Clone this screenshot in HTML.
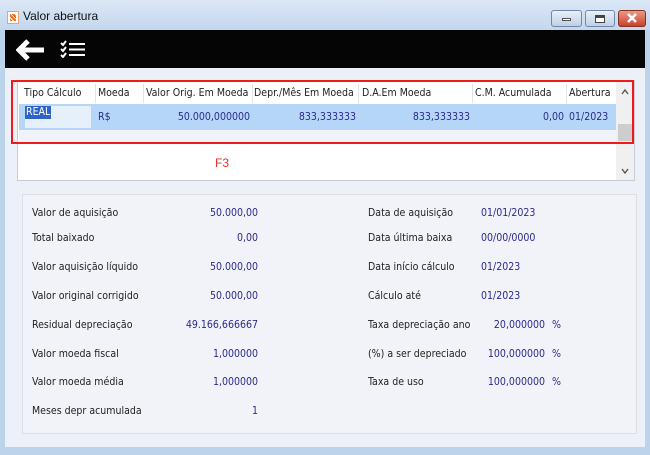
<!DOCTYPE html>
<html><head><meta charset="utf-8"><style>
*{margin:0;padding:0;box-sizing:border-box}
body{width:650px;height:455px;overflow:hidden;background:#bcd3ec;font-family:"DejaVu Sans Condensed","Liberation Sans",sans-serif;font-size:10.5px;color:#222;position:relative}
.abs{position:absolute}
.title{left:0;top:0;width:650px;height:30px;background:linear-gradient(#dbe7f5,#c4d7ee)}
.btn{top:10px;height:17px;border:1px solid #6f87a8;border-radius:3px;background:linear-gradient(#e8f0fa,#bfd0e6)}
.client{left:5px;top:30px;width:640px;height:417px;background:#eef0f7}
.tb{left:5px;top:30px;width:640px;height:38px;background:#050505}
.grid{left:17px;top:80px;width:618px;height:101px;background:#fff;border:1px solid #c9ccd4}
.hd{top:84px;height:19px;line-height:19px;color:#222;white-space:nowrap}
.sep{top:84px;width:1px;height:19px;background:#e2e4ea}
.v{color:#2b2a8c}
.panel{left:22px;top:194px;width:615px;height:240px;background:#f2f3f9;border:1px solid #dcdee6}
.l,.r,.rl,.rv{position:absolute;white-space:nowrap}
.r{text-align:right;width:120px;left:138px;color:#2b2a8c}
.rv{left:481px;color:#2b2a8c}
</style></head><body>
<div class="abs title"></div>
<div class="abs" style="left:7px;top:11px;width:12px;height:13px;background:#fff;border:1px solid #e9a46b"><div style="margin:2px;width:6px;height:7px;background:repeating-linear-gradient(45deg,#ef6c1f 0 2px,#fff 2px 3px)"></div></div>
<div class="abs" style="left:23px;top:9px;font-size:12px;font-family:'Liberation Sans',sans-serif;color:#111">Valor abertura</div>
<div class="abs btn" style="left:551px;width:31px"><div style="margin:7px auto 0;width:9px;height:3px;background:#fff;border:1px solid #555"></div></div>
<div class="abs btn" style="left:585px;width:30px"><div style="margin:4px auto 0;width:10px;height:8px;border:1px solid #444;border-top-width:3px;background:#fff"></div></div>
<div class="abs btn" style="left:618px;width:28px;background:linear-gradient(#e99a88,#c8412a);border-color:#8b2f22"><svg width="26" height="15" viewBox="0 0 26 15"><path d="M9 3 L17 11 M17 3 L9 11" stroke="#fff" stroke-width="2.6"/></svg></div>
<div class="abs client"></div>
<div class="abs tb"></div>
<svg class="abs" style="left:16px;top:39px" width="30" height="22" viewBox="0 0 30 22"><path d="M12 2 L3 11 L12 20 M3 11 H28" stroke="#fff" stroke-width="5" fill="none" stroke-linejoin="miter"/></svg>
<svg class="abs" style="left:60px;top:40px" width="26" height="18" viewBox="0 0 26 18"><g stroke="#fff" stroke-width="2" fill="none"><path d="M1 3 L3 5 L6 1 M1 9 L3 11 L6 7 M1 15 L3 17 L6 13"/><path d="M9 4 H25 M9 9.5 H25 M9 15 H25"/></g></svg>
<div class="abs grid"></div>
<div class="abs" style="left:19px;top:104px;width:597px;height:26px;background:#b6d6f8"></div>
<div class="abs" style="left:19px;top:130px;width:597px;height:14px;background:#f0f4fa"></div>
<div class="abs" style="left:616px;top:81px;width:18px;height:99px;background:#f0f0f0"></div>
<div class="abs" style="left:618px;top:124px;width:14px;height:17px;background:#cdcdcd"></div>
<svg class="abs" style="left:620px;top:88px" width="10" height="8" viewBox="0 0 10 8"><path d="M2 6 L5 2 L8 6" stroke="#555" stroke-width="1.4" fill="none"/></svg>
<svg class="abs" style="left:620px;top:167px" width="10" height="8" viewBox="0 0 10 8"><path d="M2 2 L5 6 L8 2" stroke="#555" stroke-width="1.4" fill="none"/></svg>
<div class="abs hd" style="left:24px">Tipo Cálculo</div>
<div class="abs sep" style="left:95px"></div>
<div class="abs hd" style="left:98px">Moeda</div>
<div class="abs sep" style="left:143px"></div>
<div class="abs hd" style="left:146px">Valor Orig. Em Moeda</div>
<div class="abs sep" style="left:252px"></div>
<div class="abs hd" style="left:254px">Depr./Mês Em Moeda</div>
<div class="abs sep" style="left:358px"></div>
<div class="abs hd" style="left:362px">D.A.Em Moeda</div>
<div class="abs sep" style="left:472px"></div>
<div class="abs hd" style="left:475px">C.M. Acumulada</div>
<div class="abs sep" style="left:566px"></div>
<div class="abs hd" style="left:569px">Abertura</div>
<div class="abs" style="left:25px;top:106px;width:66px;height:22px;background:#e6f0fb"></div>
<div class="abs" style="left:25px;top:106px;background:#2e63c7;color:#fff;padding:0 1px;line-height:13px">REAL</div>
<div class="abs v" style="left:98px;top:111px">R$</div>
<div class="abs v" style="left:145px;top:111px;width:105px;text-align:right">50.000,000000</div>
<div class="abs v" style="left:254px;top:111px;width:102px;text-align:right">833,333333</div>
<div class="abs v" style="left:360px;top:111px;width:110px;text-align:right">833,333333</div>
<div class="abs v" style="left:474px;top:111px;width:90px;text-align:right">0,00</div>
<div class="abs v" style="left:569px;top:111px">01/2023</div>
<div class="abs" style="left:11px;top:80px;width:623px;height:64px;border:2px solid #f01a1a"></div>
<div class="abs" style="left:215px;top:156px;color:#e8302a;font-size:12px;font-family:'Liberation Sans',sans-serif">F3</div>
<div class="abs panel"></div>
<div class="abs" style="left:0;top:0;width:650px;height:455px;font-size:10.5px">
<div class="l" style="left:32px;top:207px">Valor de aquisição</div><div class="r" style="top:207px">50.000,00</div>
<div class="l" style="left:32px;top:232px">Total baixado</div><div class="r" style="top:232px">0,00</div>
<div class="l" style="left:32px;top:261px">Valor aquisição líquido</div><div class="r" style="top:261px">50.000,00</div>
<div class="l" style="left:32px;top:290px">Valor original corrigido</div><div class="r" style="top:290px">50.000,00</div>
<div class="l" style="left:32px;top:319px">Residual depreciação</div><div class="r" style="top:319px">49.166,666667</div>
<div class="l" style="left:32px;top:348px">Valor moeda fiscal</div><div class="r" style="top:348px">1,000000</div>
<div class="l" style="left:32px;top:376px">Valor moeda média</div><div class="r" style="top:376px">1,000000</div>
<div class="l" style="left:32px;top:405px">Meses depr acumulada</div><div class="r" style="top:405px">1</div>
<div class="l" style="left:368px;top:207px">Data de aquisição</div><div class="rv" style="top:207px">01/01/2023</div>
<div class="l" style="left:368px;top:232px">Data última baixa</div><div class="rv" style="top:232px">00/00/0000</div>
<div class="l" style="left:368px;top:261px">Data início cálculo</div><div class="rv" style="top:261px">01/2023</div>
<div class="l" style="left:368px;top:290px">Cálculo até</div><div class="rv" style="top:290px">01/2023</div>
<div class="l" style="left:368px;top:319px">Taxa depreciação ano</div><div class="rv" style="top:319px;left:470px;width:75px;text-align:right">20,000000</div><div class="rv" style="top:319px;left:552px">%</div>
<div class="l" style="left:368px;top:348px">(%) a ser depreciado</div><div class="rv" style="top:348px;left:470px;width:75px;text-align:right">100,000000</div><div class="rv" style="top:348px;left:552px">%</div>
<div class="l" style="left:368px;top:376px">Taxa de uso</div><div class="rv" style="top:376px;left:470px;width:75px;text-align:right">100,000000</div><div class="rv" style="top:376px;left:552px">%</div>
</div>
</body></html>
